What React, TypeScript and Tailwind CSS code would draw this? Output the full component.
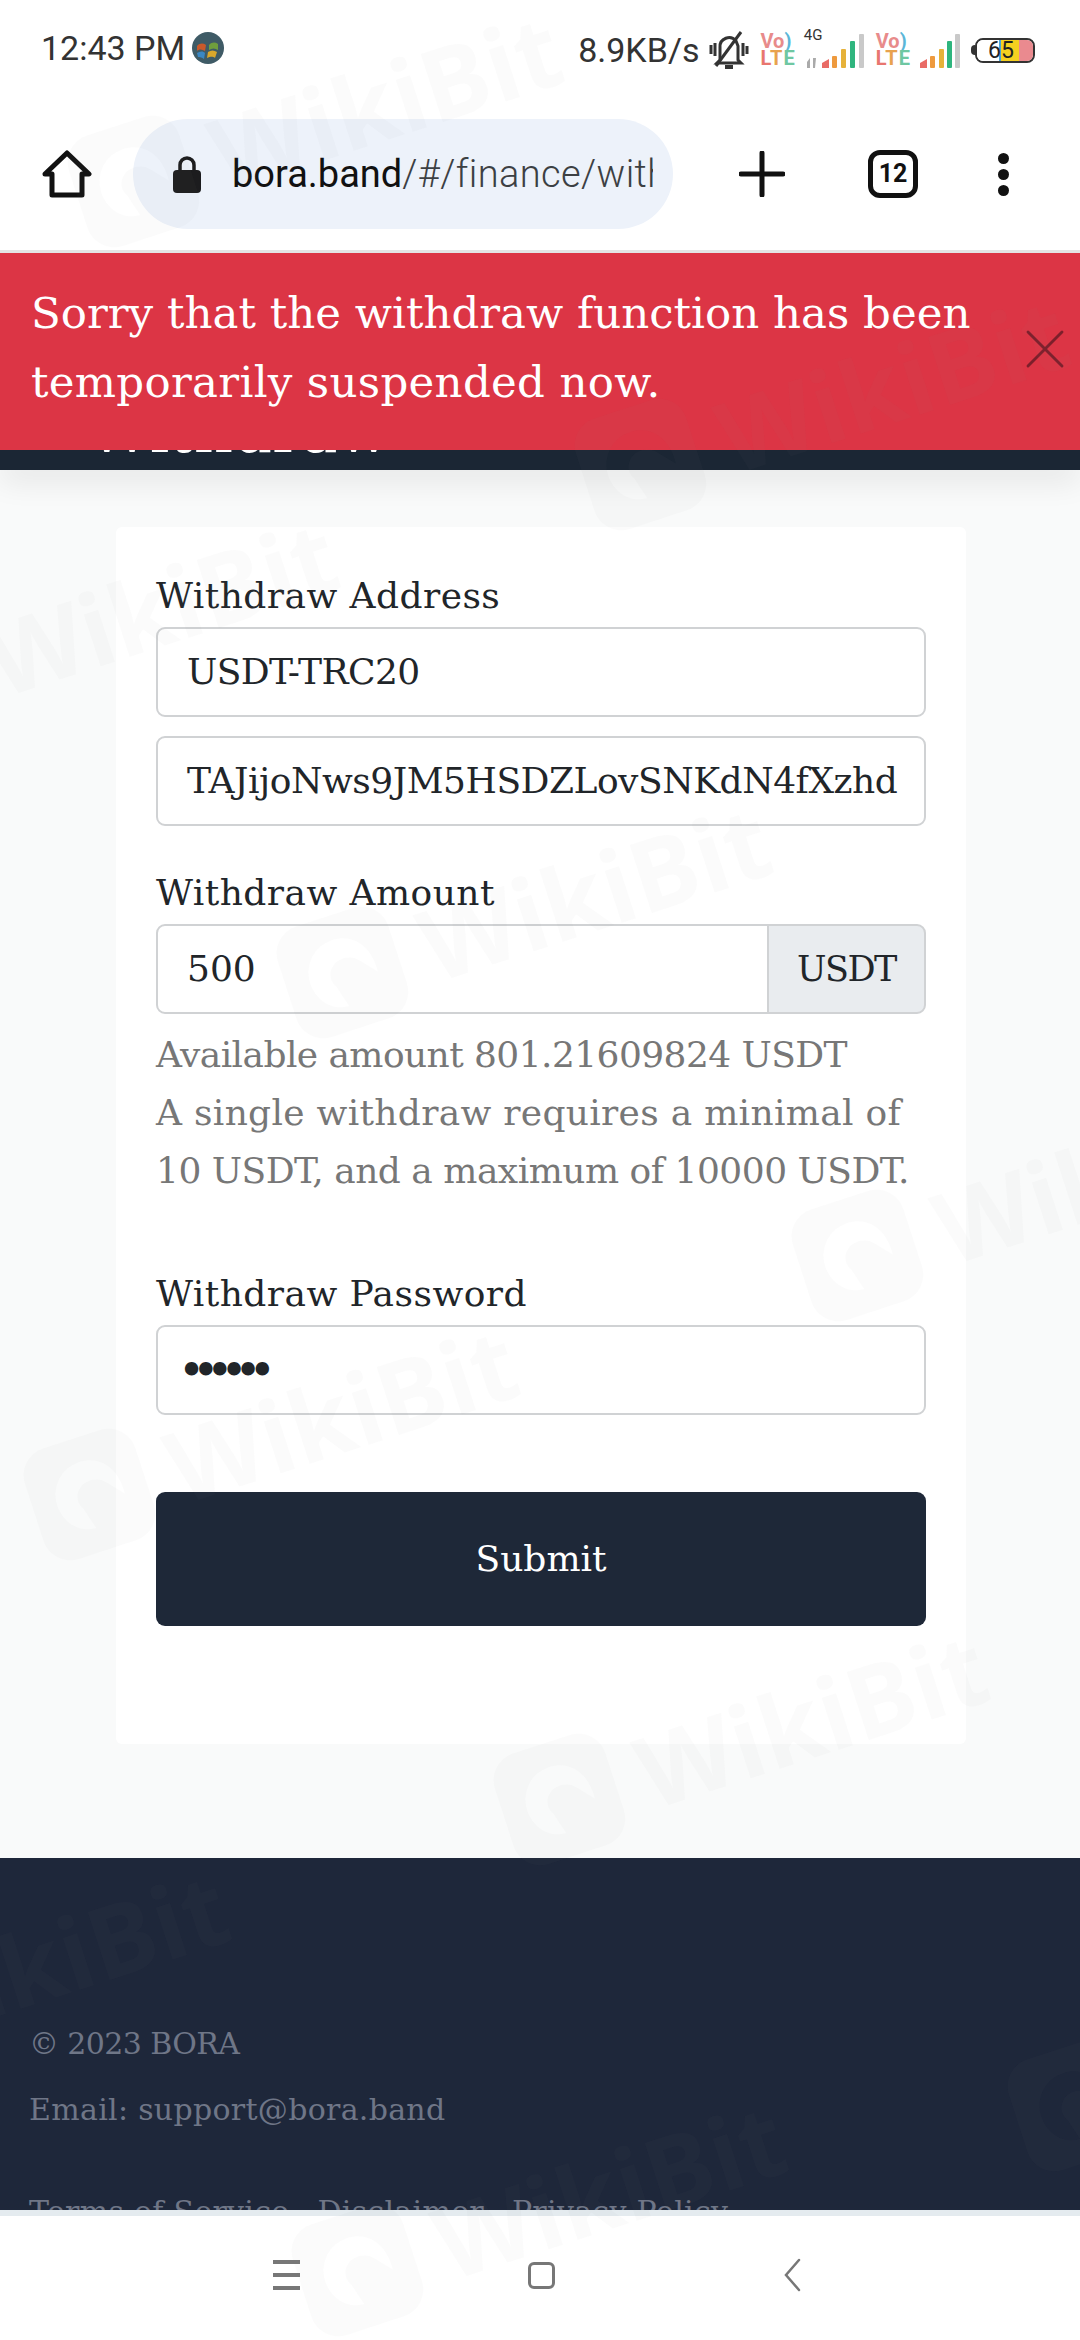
import React from 'react';
import { X } from 'lucide-react';

const serif = { fontFamily: '"DejaVu Serif", serif' };

const Watermark = ({ x, y }: { x: number; y: number }) => (
  <div
    className="absolute z-20 flex items-center gap-[24px] -rotate-[18deg] pointer-events-none text-[#808080]/[0.035]"
    style={{ left: x, top: y }}
  >
    <svg width="120" height="120" viewBox="0 0 120 120" className="shrink-0">
      <path
        fillRule="evenodd"
        fill="currentColor"
        d="M30 2h60a28 28 0 0 1 28 28v60a28 28 0 0 1-28 28H30A28 28 0 0 1 2 90V30A28 28 0 0 1 30 2zm30 24a34 34 0 0 0-34 34c0 20 14 34 30 34l-6-22c-4-6-4-14 2-20 8-8 22-6 28 2l14 16c2-26-12-44-34-44z"
      />
    </svg>
    <span className="text-[100px] font-bold font-['Open_Sans',sans-serif] leading-none">WikiBit</span>
  </div>
);

const VoLte = ({ className }: { className: string }) => (
  <div className={`flex flex-col items-start font-bold text-[20px] leading-[17px] ${className}`}>
    <span className="text-[#e88b8b]">Vo<span className="text-[#5bb6d8]">)</span></span>
    <span className="tracking-[1px]"><span className="text-[#e8766f]">L</span><span className="text-[#e8a24f]">T</span><span className="text-[#6fc7a2]">E</span></span>
  </div>
);

const StatusBar = () => (
  <div className="h-[91px] pt-[28px] flex items-start justify-between pl-[41px] pr-[45px] font-['Roboto',sans-serif] text-[#333] shrink-0">
    <div className="flex items-center gap-[6px] text-[34px] leading-[40px]">
      <span>12:43 PM</span>
      <svg width="34" height="34" viewBox="0 0 34 34">
        <circle cx="17" cy="17" r="16" fill="#3f5b66" />
        <path d="M6 15c3-3 6-3 9-1l-1 6c-3-2-6-2-8 0z" fill="#c9592b" />
        <path d="M18 14c3-3 6-3 9-1v6c-3-2-6-2-9 0z" fill="#6f9f3d" />
        <path d="M6 22c3-2 6-2 8 0l-1 6c-3-2-5-2-6-2z" fill="#3a87c4" />
        <path d="M17 21c3-2 6-2 9 0l-2 6c-3-2-5-1-8 0z" fill="#d9a72c" />
      </svg>
    </div>
    <div className="flex items-center text-[34px] leading-[40px]">
      <span className="mr-[8px]">8.9KB/s</span>
      <svg width="44" height="44" viewBox="0 0 44 44" fill="none" stroke="#333" strokeWidth="3" className="mr-[9px]">
        <path d="M13 32V19a9 9 0 0 1 16-6l2 5v14l3 3H10z" />
        <path d="M18 39h8" strokeWidth="4" />
        <path d="M9 38 34 4" />
        <path d="M4 17v9M8 15v13M36 15v13M40 18v8" />
      </svg>
      <VoLte className="mr-[8px]" />
      <div className="flex flex-col mr-[10px] relative w-[62px] h-[36px]">
        <span className="absolute left-0 -top-[4px] text-[15px] leading-none">4G</span>
        <svg width="62" height="36" viewBox="0 0 62 36">
          <path d="M3 30l3-4v10H3zM9 26h3l-1 10H9z" fill="#aaa" />
          <path d="M18 36v-5l7-4v9z" fill="#e96b66" />
          <rect x="28" y="24" width="5" height="12" rx="1" fill="#ee9a3e" />
          <rect x="37" y="17" width="5" height="19" rx="1" fill="#e6b23a" />
          <rect x="46" y="9" width="5" height="27" rx="1" fill="#2fb57e" />
          <rect x="55" y="2" width="5" height="34" rx="1" fill="#c9c9c9" />
        </svg>
      </div>
      <VoLte className="mr-[9px]" />
      <svg width="40" height="36" viewBox="0 0 40 36" className="mr-[11px]">
        <path d="M0 36v-5l7-4v9z" fill="#e96b66" />
        <rect x="10" y="24" width="5" height="12" rx="1" fill="#ee9a3e" />
        <rect x="19" y="17" width="5" height="19" rx="1" fill="#e6b23a" />
        <rect x="27" y="9" width="5" height="27" rx="1" fill="#2fb57e" />
        <rect x="35" y="2" width="5" height="34" rx="1" fill="#c9c9c9" />
      </svg>
      <div className="relative flex items-center">
        <div className="w-[4px] h-[10px] bg-[#333] rounded-l-sm" />
        <div className="w-[60px] h-[25px] border-[2px] border-[#333] rounded-[8px] overflow-hidden flex">
          <div className="w-[22px] bg-white" />
          <div className="w-[2px] bg-[#4aa3d8]" />
          <div className="w-[18px] bg-[#f5d020]" />
          <div className="flex-1 bg-[#ea8a8f]" />
        </div>
        <span className="absolute left-[17px] top-[1px] text-[23px] leading-none text-[#222]">65</span>
      </div>
    </div>
  </div>
);

const BrowserBar = () => (
  <div className="h-[162px] shrink-0 flex items-center pl-[42px] border-b-[3px] border-[#e4e4e4] pt-[7px]">
    <svg width="50" height="50" viewBox="0 0 50 50" fill="none" stroke="#111" strokeWidth="5" strokeLinejoin="round" className="shrink-0">
      <path d="M25 4 47 25h-7v21H10V25H3z" />
    </svg>
    <div className="ml-[41px] w-[540px] h-[110px] rounded-full bg-[#edf2fa] flex items-center pl-[39px] shrink-0">
      <svg width="30" height="40" viewBox="0 0 30 40" className="shrink-0">
        <path d="M8 17v-6a7 7 0 0 1 14 0v6" fill="none" stroke="#1c1c1e" strokeWidth="3.5" />
        <rect x="1" y="16" width="28" height="23" rx="4" fill="#1c1c1e" />
      </svg>
      <div className="ml-[30px] w-[421px] overflow-hidden whitespace-nowrap text-[38px] font-['Roboto',sans-serif] font-light text-[#3c4043]">
        <span className="text-[#111] font-normal">bora.band</span><span className="tracking-[0.4px]">/#/finance/withdraw</span>
      </div>
    </div>
    <svg width="46" height="46" viewBox="0 0 46 46" stroke="#111" strokeWidth="5" strokeLinecap="round" className="ml-[66px] shrink-0">
      <path d="M23 2v42M2 23h42" />
    </svg>
    <div className="ml-[83px] w-[50px] h-[48px] shrink-0 rounded-[12px] border-[5px] border-[#111] flex items-center justify-center font-['Roboto',sans-serif] font-bold text-[25px] text-[#111]">12</div>
    <div className="ml-[80px] flex flex-col gap-[5px] shrink-0">
      <div className="w-[11px] h-[11px] rounded-full bg-[#111]" />
      <div className="w-[11px] h-[11px] rounded-full bg-[#111]" />
      <div className="w-[11px] h-[11px] rounded-full bg-[#111]" />
    </div>
  </div>
);

const inputCls = 'w-full h-[90px] bg-white border-2 border-[#d0d2d4] rounded-[9px] px-[29px] flex items-center text-[36px] text-[#212529] overflow-hidden whitespace-nowrap';
const labelCls = 'text-[36px] leading-[44px] text-[#212529] mb-[9px] tracking-[0.45px]';

export default function App() {
  return (
    <div className="relative w-[1080px] h-[2340px] overflow-hidden flex flex-col bg-white" style={serif}>
      <StatusBar />
      <BrowserBar />

      <div className="h-[197px] shrink-0 bg-[#dc3545] text-white text-[43.5px] leading-[69px] pl-[31px] pt-[26px] relative z-10">
        <div className="whitespace-nowrap">Sorry that the withdraw function has been<br /><span className="tracking-[0.3px]">temporarily suspended now.</span></div>
        <X className="absolute right-[1px] top-[62px] text-[#7d1f2b]" size={68} strokeWidth={1} />
      </div>

      <div className="h-[20px] shrink-0 bg-[#1b2634] shadow-[0_10px_30px_rgba(0,0,0,0.1)] overflow-hidden relative">
        <div className="text-white text-[61px] leading-[60px] ml-[88px] -mt-[49px]">Withdraw</div>
      </div>

      <div className="flex-1 min-h-0 bg-[#f9fafa] flex flex-col">
        <div className="ml-[116px] mr-[114px] mt-[57px] h-[1217px] shrink-0 bg-white rounded-[6px] px-[40px] pt-[47px]">
          <div className={labelCls}>Withdraw Address</div>
          <div className={`${inputCls} tracking-[-0.6px]`}>USDT-TRC20</div>
          <div className={`${inputCls} mt-[19px] tracking-[-0.48px]`}>TAJijoNws9JM5HSDZLovSNKdN4fXzhd</div>

          <div className={`${labelCls} mt-[45px]`}>Withdraw Amount</div>
          <div className="flex">
            <div className={`${inputCls} flex-1 rounded-r-none`}>500</div>
            <div className="w-[159px] h-[90px] shrink-0 -ml-[2px] bg-[#e9ecef] border-2 border-[#d0d2d4] rounded-r-[9px] flex items-center justify-center text-[35px] tracking-[-1.5px] text-[#212529]">USDT</div>
          </div>
          <div className="mt-[12px] text-[36px] leading-[58px] text-[#777] whitespace-nowrap">
            <div className="tracking-[-0.57px]">Available amount 801.21609824 USDT</div>
            <div className="tracking-[0.3px]">A single withdraw requires a minimal of</div>
            <div className="tracking-[-0.5px]">10 USDT, and a maximum of 10000 USDT.</div>
          </div>

          <div className={`${labelCls} mt-[72px]`}>Withdraw Password</div>
          <div className={`${inputCls} !text-[46px] tracking-[-13px] leading-none !pl-[20px]`}>••••••</div>

          <div className="mt-[77px] h-[134px] bg-[#1e2838] rounded-[9px] flex items-center justify-center text-white text-[36px]">Submit</div>
        </div>

        <div className="mt-[114px] flex-1 min-h-0 bg-[#1e273a] text-[#6f7687] text-[30px] pl-[29px] overflow-hidden">
          <div className="mt-[164px] leading-[44px] tracking-[-0.6px]">© 2023 BORA</div>
          <div className="mt-[22px] leading-[44px] tracking-[0.3px]">Email: support@bora.band</div>
          <div className="mt-[58px] leading-[44px] flex gap-[28px] whitespace-nowrap tracking-[0.3px]">
            <span>Terms of Service</span><span>Disclaimer</span><span>Privacy Policy</span>
          </div>
        </div>
      </div>

      <div className="h-[130px] shrink-0 bg-white border-t-[6px] border-[#e4ebef] flex items-center justify-center gap-[228px] pb-[6px] pr-[6px] relative z-10">
        <div className="flex flex-col gap-[9px]">
          <div className="w-[27px] h-[4px] bg-[#777]" /><div className="w-[27px] h-[4px] bg-[#777]" /><div className="w-[27px] h-[4px] bg-[#777]" />
        </div>
        <div className="w-[27px] h-[27px] rounded-[6px] border-[3px] border-[#777]" />
        <svg width="18" height="34" viewBox="0 0 18 34" fill="none" stroke="#777" strokeWidth="2.5" strokeLinecap="round">
          <path d="M16 2 3 17l13 15" />
        </svg>
      </div>

      <Watermark x={64} y={62} />
      <Watermark x={571} y={345} />
      <Watermark x={-160} y={568} />
      <Watermark x={273} y={853} />
      <Watermark x={788} y={1136} />
      <Watermark x={20} y={1375} />
      <Watermark x={490} y={1680} />
      <Watermark x={-269} y={1920} />
      <Watermark x={1004} y={1986} />
      <Watermark x={288} y={2151} />
    </div>
  );
}
